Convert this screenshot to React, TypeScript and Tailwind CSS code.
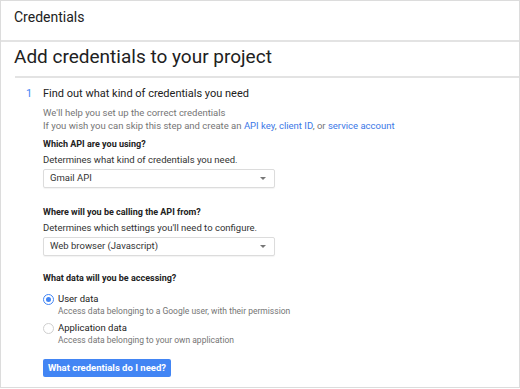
import React, { useState } from 'react';

const Select: React.FC<{ value: string }> = ({ value }) => (
  <div className="mt-[3px] flex h-[19px] w-[232px] items-center justify-between rounded-[2px] border border-[#dcdcdc] bg-white pl-[6px] pr-[8px] text-[9.5px] text-[#333] shadow-[0_1px_1px_rgba(0,0,0,0.05)]">
    <span>{value}</span>
    <svg width="6" height="3" viewBox="0 0 6 3"><path d="M0 0h6L3 3z" fill="#777" /></svg>
  </div>
);

const Radio: React.FC<{ checked: boolean; label: string; hint: string; onClick: () => void }> = ({ checked, label, hint, onClick }) => (
  <div className="flex cursor-pointer items-start" onClick={onClick}>
    <div className="flex w-[15px] shrink-0 justify-start pt-[0.5px]">
      <div className={`flex h-[11px] w-[11px] items-center justify-center rounded-full border ${checked ? 'border-[#4285f4]' : 'border-[#cfcfcf]'}`}>
        {checked && <div className="h-[5px] w-[5px] rounded-full bg-[#4285f4]" />}
      </div>
    </div>
    <div>
      <div className="text-[9.5px] leading-[12px] text-[#222]">{label}</div>
      <div className="text-[8.5px] leading-[12px] text-[#757575]">{hint}</div>
    </div>
  </div>
);

export default function App() {
  const [data, setData] = useState<'user' | 'app'>('user');

  return (
    <div className="h-[388px] w-[520px] overflow-hidden border border-[#dcdcdc] bg-white font-['Roboto',sans-serif] text-[#212121]">
      <div className="h-[41px] border-b-2 border-[#e3e3e3] pl-[13px] pt-[8px] text-[14px] leading-[16px]">Credentials</div>

      <div className="pl-[13px]">
        <h1 className="pt-[3px] pb-[7px] text-[19px] leading-[24px] font-normal">Add credentials to your project</h1>
        <div className="ml-[1px] border-t-2 border-[#e3e3e3]" />
      </div>

      <div className="flex pl-[25px] pt-[9px]">
        <div className="w-[17px] text-[11px] leading-[14px] text-[#4285f4]">1</div>
        <div>
          <div className="text-[11px] leading-[14px]">Find out what kind of credentials you need</div>

          <div className="mt-[5px] text-[9.5px] leading-[13px] text-[#757575]">
            <div>We'll help you set up the correct credentials</div>
            <div>
              If you wish you can skip this step and create an{' '}
              <a className="text-[#3b78e7]">API key</a>, <a className="text-[#3b78e7]">client ID</a>, or{' '}
              <a className="text-[#3b78e7]">service account</a>
            </div>
          </div>

          <div className="mt-[6px] text-[9px] leading-[13px] font-bold text-[#222]">Which API are you using?</div>
          <div className="mt-[2px] text-[9.5px] leading-[13px] text-[#333]">Determines what kind of credentials you need.</div>
          <Select value="Gmail API" />

          <div className="mt-[18px] text-[9px] leading-[13px] font-bold text-[#222]">Where will you be calling the API from?</div>
          <div className="mt-[2px] text-[9.5px] leading-[13px] text-[#333]">Determines which settings you'll need to configure.</div>
          <Select value="Web browser (Javascript)" />

          <div className="mt-[16px] text-[9px] leading-[13px] font-bold text-[#222]">What data will you be accessing?</div>
          <div className="mt-[8px] flex flex-col gap-[5px]">
            <Radio checked={data === 'user'} label="User data" hint="Access data belonging to a Google user, with their permission" onClick={() => setData('user')} />
            <Radio checked={data === 'app'} label="Application data" hint="Access data belonging to your own application" onClick={() => setData('app')} />
          </div>

          <button className="mt-[13px] h-[18px] w-[128px] rounded-[2px] bg-[#4285f4] text-[9.5px] font-bold text-white">
            What credentials do I need?
          </button>
        </div>
      </div>
    </div>
  );
}
